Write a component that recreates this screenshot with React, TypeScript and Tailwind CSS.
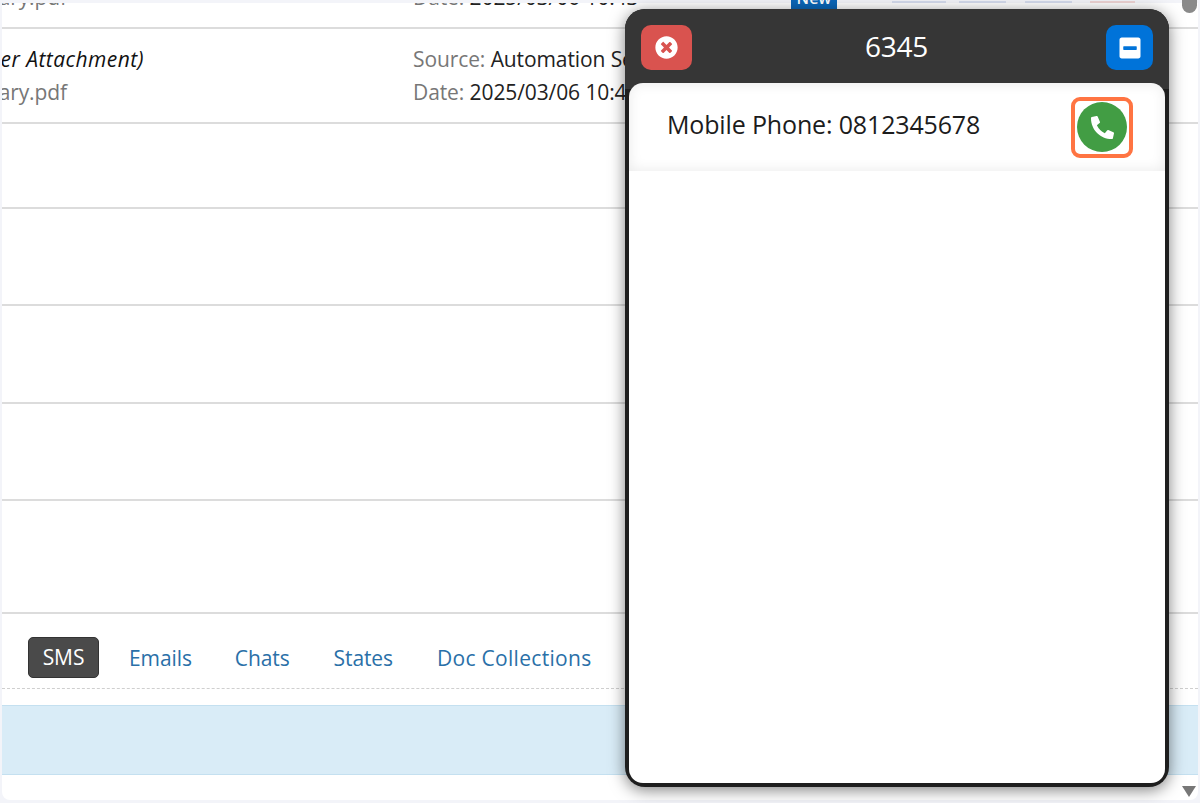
import React from 'react';
import { FaTimesCircle, FaMinusSquare, FaPhoneAlt } from 'react-icons/fa';

const font = { fontFamily: '"Open Sans", "Noto Sans", sans-serif' };

const EmptyRow = (props: { h: string }) => <div className={`${props.h} border-b-2 border-[#dcdcdc]`} />;

const Tab = (props: { label: string, className?: string }) => (
    <a className={`mt-[3px] text-[21px] text-[#2a70a8] ${props.className ?? 'tracking-[-0.1px]'}`}>{props.label}</a>
);

const AttachmentRow = (props: { title?: string, file: string, source?: string, date: string, h: string }) => (
    <div className={`${props.h} shrink-0 flex items-end border-b-2 border-[#dcdcdc] text-[21px] tracking-[-0.1px] pb-[14px]`}>
        <div className="w-[144px] flex flex-col gap-[1.5px] whitespace-nowrap">
            {props.title && <div className="self-end italic tracking-[0.45px] text-[#111]">{props.title}</div>}
            <div className="w-[67px] flex justify-end text-[#777]">{props.file}</div>
        </div>
        <div className="ml-[269px] flex flex-col gap-[1.5px] whitespace-nowrap">
            {props.source && <div className="text-[#777]">Source: <span className="text-[#222]">{props.source}</span></div>}
            <div className="text-[#777]">Date: <span className="text-[#222]">{props.date}</span></div>
        </div>
    </div>
);

export default function App() {
    return (
        <div className="w-[1200px] h-[803px] bg-[#f3f4f9] overflow-hidden relative" style={font}>
            <div className="ml-[2px] mr-[2px] mt-[3px] h-[797px] bg-white rounded-b-lg overflow-hidden relative flex flex-col">
                <div className="h-[26px] relative shrink-0 flex flex-col justify-end">
                    <AttachmentRow file="Summary.pdf" date="2025/03/06 10:43" h="h-[64px] -ml-[2px]" />
                </div>
                <AttachmentRow title="(Customer Attachment)" file="Summary.pdf" source="Automation Service" date="2025/03/06 10:43" h="h-[95px] -ml-[2px]" />
                <EmptyRow h="h-[85px] shrink-0" />
                <EmptyRow h="h-[97px] shrink-0" />
                <EmptyRow h="h-[98px] shrink-0" />
                <EmptyRow h="h-[97px] shrink-0" />
                <EmptyRow h="h-[113px] shrink-0" />
                <div className="h-[75px] shrink-0 flex items-center pl-[26px] pt-[12px] gap-[43px] border-b border-dashed border-[#cfcfcf]">
                    <span className="w-[71px] h-[41px] -mr-[13px] flex items-center justify-center rounded-[5px] bg-[#4a4a4a] border border-[#333] text-white text-[21px] tracking-[-0.1px]"><span className="mt-[1px]">SMS</span></span>
                    <Tab label="Emails" />
                    <Tab label="Chats" />
                    <Tab label="States" className="ml-[1px] tracking-[-0.1px]" />
                    <Tab label="Doc Collections" className="ml-[1px] tracking-[0.3px]" />
                </div>
                <div className="mt-[16px] h-[70px] shrink-0 bg-[#d9ecf7] border-y border-[#c4e0f0]" />
            </div>

            <div className="absolute left-[791px] top-0 w-[46px] h-[9px] pb-[3px] bg-[#0a66b8] overflow-hidden flex justify-center items-end text-white text-[16px] font-semibold leading-none">New</div>
            <div className="absolute left-[892px] top-[1px] w-[54px] h-[2px] bg-[#d5dcee]" />
            <div className="absolute left-[959px] top-[1px] w-[47px] h-[2px] bg-[#d5dcee]" />
            <div className="absolute left-[1025px] top-[1px] w-[47px] h-[2px] bg-[#d5dcee]" />
            <div className="absolute left-[1090px] top-[1px] w-[45px] h-[2px] bg-[#efd5d5]" />

            <div className="absolute left-[1182px] top-0 w-[15px] h-[13px] rounded-b-full bg-[#8a8a8a]" />
            <div className="absolute left-[1182px] top-[786px] w-0 h-0 border-x-[7px] border-x-transparent border-t-[11px] border-t-[#777]" />

            <div className="absolute left-[625px] top-[9px] w-[544px] h-[778px] bg-[#1e1e1e] rounded-[20px] shadow-[0_3px_16px_rgba(0,0,0,0.5)] flex flex-col px-[4px] pb-[4px]">
                <div className="-mx-[4px] h-[80px] -mb-[6px] shrink-0 flex items-start justify-between bg-[#363636] rounded-t-[20px] pt-[16px] pl-[16px] pr-[16px]">
                    <button className="w-[51px] h-[45px] rounded-[10px] bg-[#d9534f] flex items-center justify-center text-white text-[23px]"><FaTimesCircle /></button>
                    <span className="mr-[5px] text-white text-[28px] tracking-[-0.3px]">6345</span>
                    <button className="w-[47px] h-[45px] rounded-[10px] bg-[#0073d9] flex items-center justify-center text-white text-[24px]"><FaMinusSquare /></button>
                </div>
                <div className="relative flex-1 bg-white rounded-[14px] overflow-hidden">
                    <div className="h-[88px] flex items-center justify-between pl-[38px] pr-[32px] shadow-[inset_0_0_14px_rgba(0,0,0,0.09)]">
                        <span className="-mt-[4px] text-[25px] tracking-[-0.15px] text-[#1c1c1c]">Mobile Phone: 0812345678</span>
                        <span className="w-[62px] h-[61px] border-[4px] border-[#ff7442] rounded-[9px] flex items-center justify-center">
                            <span className="w-[50px] h-[50px] shrink-0 rounded-full bg-[#429d44] flex items-center justify-center text-white text-[23px]"><FaPhoneAlt /></span>
                        </span>
                    </div>
                </div>
            </div>
        </div>
    );
}
